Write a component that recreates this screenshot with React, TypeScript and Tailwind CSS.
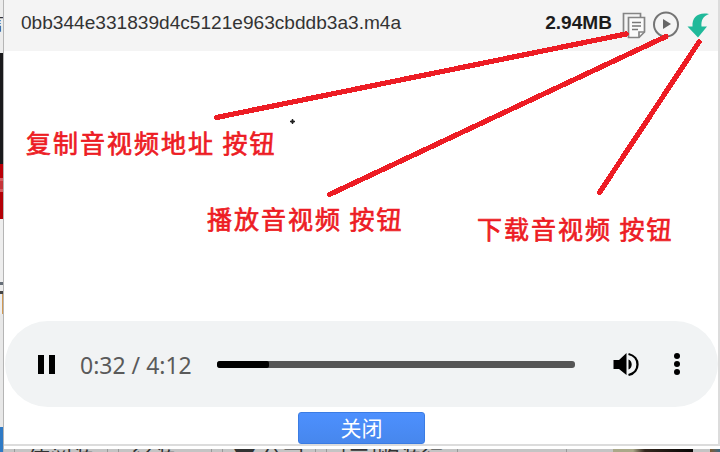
import React from "react";

const cjk = "font-['Noto_Sans_CJK_SC',sans-serif]";

function Note({ className, children }: { className: string; children: string }) {
  return (
    <div
      className={`absolute whitespace-pre text-[25px] leading-[30px] font-normal tracking-[2px] text-[#ed1c24] [-webkit-text-stroke:0.7px_#ed1c24] ${cjk} ${className}`}
    >
      {children}
    </div>
  );
}

function PageEdge() {
  return (
    <div className={`relative flex w-[4px] shrink-0 flex-col overflow-hidden border-r border-[#b5b5b5] bg-[#ededed] ${cjk}`}>
      <div className="h-[53px] shrink-0 bg-[#ececec] pt-[12px]">
        <div className="ml-[-14px] w-[18px] text-[18px] leading-[20px] text-[#333]">言</div>
      </div>
      <div className="h-[111px] shrink-0 bg-[#1a1a1c]" />
      <div className="h-[14px] shrink-0 bg-[#b90007]" />
      <div className="h-[14px] shrink-0 border-y-[3px] border-[#d65a5e] bg-[#c63439]" />
      <div className="h-[27px] shrink-0 bg-[#b40006]" />
      <div className="h-[63px] shrink-0 bg-[#eeeeee]" />
      <div className="h-[3px] shrink-0 bg-[#666e78]" />
      <div className="h-[6px] shrink-0 bg-[#eeeeee]" />
      <div className="h-[3px] shrink-0 bg-[#444]" />
      <div className="h-[20px] shrink-0 border-r border-[#d19953] bg-[#eeeeee]" />
      <div className="flex-1 bg-[#e8e8e8]" />
      <div className="h-[25px] shrink-0 bg-[#2f7ac5]" />
    </div>
  );
}

function Header() {
  return (
    <div className="flex h-[51px] shrink-0 items-center bg-[#f4f4f4] pl-[17px] font-['Liberation_Sans',Arial,sans-serif] text-[19.1px] text-[#333]">
      <span className="mt-[-4px] w-[400px] whitespace-nowrap">0bb344e331839d4c5121e963cbddb3a3.m4a</span>
      <span className="mt-[-4px] ml-auto font-bold text-[#1c1c1c]">2.94MB</span>
      <svg className="ml-[10px] h-[51px] w-[96px]" viewBox="622 0 96 51" fill="none">
        <path d="M628 34H623.5V13.500H640.500V17" stroke="#858585" strokeWidth="1.7" />
        <path d="M628.500 17.500H644.500V32L639 37.500H628.500Z" fill="#fafafa" stroke="#858585" strokeWidth="1.7" />
        <path d="M644.500 32H639V37.500" stroke="#858585" strokeWidth="1.7" />
        <path d="M632 22.500H641M632 26H641M632 29.500H638" stroke="#777" strokeWidth="1.6" />
        <circle cx="666" cy="24.500" r="12" stroke="#747474" strokeWidth="2" />
        <path d="M663 19L671 24L663 29Z" fill="#666" />
        <path d="M709 14C698 12 692 17 692.500 26.500H687.500L698 37.500L707 26.500H701.500C701 20 703 16.500 709 14Z" fill="#20b99a" />
      </svg>
    </div>
  );
}

function Player() {
  return (
    <div className="mt-[270px] ml-[1px] flex h-[86px] w-[713px] shrink-0 items-center rounded-full bg-[#f1f3f4]">
      <div className="ml-[33px] flex w-[17px] gap-[5px]">
        <div className="h-[19px] w-[6px] bg-black" />
        <div className="h-[19px] w-[6px] bg-black" />
      </div>
      <span className="mt-[1px] ml-[25px] w-[137px] whitespace-nowrap font-['Noto_Sans',sans-serif] text-[23px] leading-[30px] text-[#5a5a5a]">
        0:32 / 4:12
      </span>
      <div className="flex h-[7px] w-[358px] overflow-hidden rounded-[3px] bg-[#555]">
        <div className="w-[52px] rounded-r-[2px] bg-black" />
      </div>
      <svg className="ml-[38px] h-[26px] w-[26px]" viewBox="613 351 26 26" fill="none">
        <path d="M613.500 360H619L626.500 353V375L619 369H613.500Z" fill="#000" />
        <path d="M628.500 359.500C632.800 361.200 632.800 367.800 628.500 369.500Z" fill="#000" />
        <path d="M628.500 354C640.500 356.800 640.500 372.200 628.500 375" stroke="#000" strokeWidth="2.300" />
      </svg>
      <div className="ml-[35px] flex flex-col gap-[2px]">
        <div className="size-[6px] rounded-full bg-black" />
        <div className="size-[6px] rounded-full bg-black" />
        <div className="size-[6px] rounded-full bg-black" />
      </div>
    </div>
  );
}

function PageBottom() {
  return (
    <div className={`flex h-[3px] shrink-0 items-start overflow-hidden whitespace-pre bg-[#c4c4c4] text-[22px] leading-[12px] text-[#333] ${cjk}`}>
      <div className="ml-[10px] flex h-[18px] w-[94px] shrink-0 justify-center border-x border-[#999]">体阅源</div>
      <div className="ml-[10px] flex h-[18px] w-[94px] shrink-0 justify-center border-x border-[#999]">径源一</div>
      <div className="ml-[10px] flex h-[18px] w-[94px] shrink-0 justify-center border-x border-[#999]">▼ 公司</div>
      <div className="ml-[10px] flex h-[18px] w-[132px] shrink-0 justify-center border-x border-[#999]">[三]购源行</div>
      <div className="ml-[108px] h-[18px] w-[1px] shrink-0 bg-[#999]" />
      <div className="ml-[46px] h-[18px] w-[80px] shrink-0 bg-linear-to-r from-[#aaa889] from-25% via-[#34271e] via-40% to-[#090706]" />
      <div className="ml-[17px] h-[18px] w-[10px] shrink-0 bg-linear-to-r from-[#805a2d] to-[#376580]" />
    </div>
  );
}

export default function App() {
  return (
    <div className="flex h-[452px] w-[720px] overflow-hidden bg-white">
      <PageEdge />
      <div className="flex min-w-0 flex-1 flex-col">
        <div className="flex h-[446px] shrink-0 flex-col border-r-2 border-b-2 border-[#dcdcdc] bg-white">
          <Header />
          <Player />
          <button className={`mt-[5px] ml-[294px] h-[32px] w-[127px] shrink-0 rounded-[3px] border border-[#3b7ce3] bg-linear-to-b from-[#4d90fe] to-[#4787ed] pb-[3px] text-[21px] leading-[26px] text-white ${cjk}`}>
            关闭
          </button>
        </div>
        <div className="h-[3px] shrink-0 bg-white" />
        <PageBottom />
      </div>
      <Note className="top-[127px] left-[26px]">复制音视频地址 按钮</Note>
      <Note className="top-[203px] left-[207px]">播放音视频 按钮</Note>
      <Note className="top-[213px] left-[477px]">下载音视频 按钮</Note>
      <svg className="absolute top-0 left-0" width="720" height="452" fill="none">
        <g stroke="#ed1c24" strokeWidth="5.2" strokeLinecap="round" shapeRendering="crispEdges">
          <path d="M216.500 117.500L626 34" />
          <path d="M329.500 194.500L666 36.500" />
          <path d="M599.500 192.500L699 42" />
        </g>
        <path d="M292.500 119V124M290 121.500H295" stroke="#222" strokeWidth="1.400" />
        <circle cx="292.500" cy="121.500" r="1.500" fill="#222" />
      </svg>
    </div>
  );
}
